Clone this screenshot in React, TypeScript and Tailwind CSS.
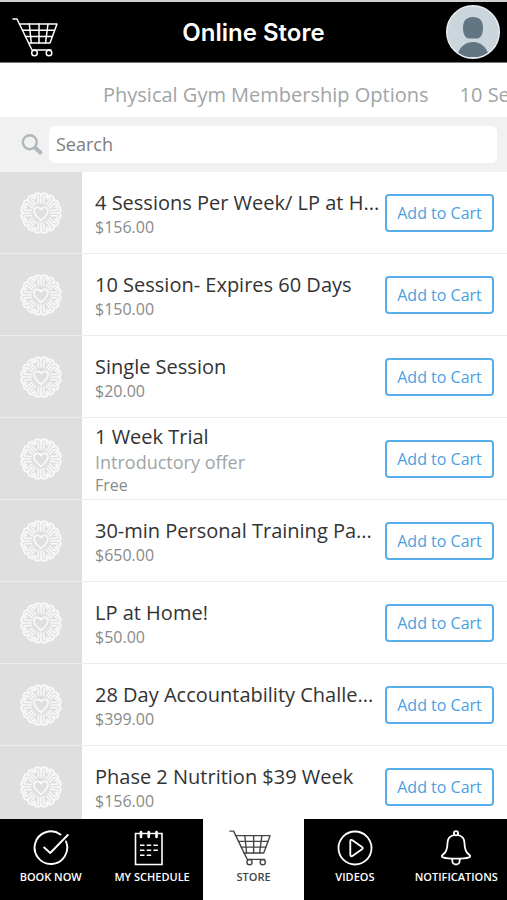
import type { ReactNode } from "react";
import clsx from "clsx";

type Product = {
  name: string;
  price: string;
  note?: string;
};

const categories = ["Physical Gym Membership Options", "10 Se"];

const products: Product[] = [
  { name: "4 Sessions Per Week/ LP at H...", price: "$156.00" },
  { name: "10 Session- Expires 60 Days", price: "$150.00" },
  { name: "Single Session", price: "$20.00" },
  { name: "1 Week Trial", price: "Free", note: "Introductory offer" },
  { name: "30-min Personal Training Pa...", price: "$650.00" },
  { name: "LP at Home!", price: "$50.00" },
  { name: "28 Day Accountability Challe...", price: "$399.00" },
  { name: "Phase 2 Nutrition $39 Week", price: "$156.00" },
];

function CartIcon({ className }: { className?: string }) {
  return (
    <svg viewBox="0 0 46 39" fill="none" stroke="currentColor" strokeWidth="1.5" strokeLinecap="round" strokeLinejoin="round" className={className} aria-hidden="true">
      <path d="M1 1h4l15 31h19" />
      <path d="M7.5 6H45l-7 19H16.5" />
      <path d="M10.5 12.3h32M13.5 18.6h26.8" />
      <path d="M17.3 6l2 19M27 6v19M36 6l-2.5 19" />
      <circle cx="22.5" cy="35" r="2.8" />
      <circle cx="37" cy="35" r="2.8" />
    </svg>
  );
}

function CheckIcon() {
  return (
    <svg viewBox="0 0 36 36" fill="none" stroke="currentColor" strokeWidth="1.9" strokeLinecap="round" strokeLinejoin="round" className="size-9" aria-hidden="true">
      <path d="M27.5 4.5A16.3 16.3 0 1 0 33 11.5" />
      <path d="M11.2 17.5l6 5.5L34.8 5" />
    </svg>
  );
}

function CalendarIcon() {
  return (
    <svg viewBox="0 0 36 36" fill="none" stroke="currentColor" strokeWidth="1.6" className="size-9" aria-hidden="true">
      <path d="M1.5 3.5H28v31H1.5z" />
      <path d="M7 2v5M14.7 2v5M22.5 2v5" strokeWidth="2.6" strokeLinecap="round" />
      <path d="M6 15.2h4.5M12.7 15.2h4.5M19.4 15.2h4.5M6 20.2h4.5M12.7 20.2h4.5M19.4 20.2h4.5M6 25.3h4.5M12.7 25.3h4.5" />
    </svg>
  );
}

function PlayIcon() {
  return (
    <svg viewBox="0 0 36 36" fill="none" stroke="currentColor" strokeWidth="1.8" strokeLinejoin="round" className="size-9" aria-hidden="true">
      <circle cx="18" cy="18" r="16.5" />
      <path d="M13.3 11.2v13.6c0 1.3 1 1.8 2.1 1.1l9.6-6.6c1-.7 1-1.7 0-2.4l-9.6-6.7c-1.1-.8-2.1-.3-2.1 1z" />
    </svg>
  );
}

function BellIcon() {
  return (
    <svg viewBox="0 0 36 36" fill="none" stroke="currentColor" strokeWidth="1.8" strokeLinecap="round" strokeLinejoin="round" className="size-9" aria-hidden="true">
      <circle cx="18" cy="3.3" r="2.1" />
      <path d="M16 5C12 6 9.5 9 9.5 13c0 6-1 9.500-5 12-1.2.8-.8 2 .4 2.3 3 1 8 1.4 13.1 1.4s10.1-.4 13.1-1.4c1.2-.3 1.6-1.5.4-2.3-4-2.5-5-6-5-12 0-4-2.5-7-6.500-8" />
      <path d="M14.3 29v1.8a3.7 3.7 0 0 0 7.4 0V29" />
    </svg>
  );
}

function SearchIcon() {
  return (
    <svg viewBox="0 0 22 22" fill="none" stroke="currentColor" strokeLinecap="round" className="size-[22px] shrink-0 text-[#aeb8bb]" aria-hidden="true">
      <circle cx="8.8" cy="8.2" r="7" strokeWidth="2.4" />
      <path d="M15 14.500l4.300 4" strokeWidth="4" />
    </svg>
  );
}

const lobes = Array.from({ length: 8 }, (_, i) => i * 45 + 22.5);

// Placeholder emblem: a heart inside a ring of petals
function Emblem() {
  return (
    <svg viewBox="-21 -21 42 42" fill="none" stroke="#f8f8f8" strokeLinecap="round" strokeLinejoin="round" className="size-[42px]" aria-hidden="true">
      {lobes.map((angle) => (
        <g key={angle} transform={`rotate(${angle})`}>
          <path d="M-6.5-16C-7-20.500-2-20.500 0-18.500C2-20.500 7-20.500 6.5-16" strokeWidth="2" />
          <path d="M-1.300-10L-3.500-15.500C-3.500-18 -1-18 0-15.500C1-18 3.500-18 3.500-15.500L1.300-10" strokeWidth="1.600" />
        </g>
      ))}
      {lobes.map((angle) => (
        <path key={angle} d="M0-10V-16" strokeWidth="1.6" transform={`rotate(${angle + 22.5})`} />
      ))}
      <path d="M0 7.5C-3 4.5-7 2-7-2C-7-6-2-7 0-3.5C2-7 7-6 7-2C7 2 3 4.5 0 7.5z" strokeWidth="1.800" />
    </svg>
  );
}

function Avatar() {
  return (
    <svg viewBox="0 0 54 54" className="size-[54px]" aria-hidden="true">
      <defs>
        <clipPath id="avatar-clip">
          <circle cx="27" cy="27" r="25.5" />
        </clipPath>
      </defs>
      <circle cx="27" cy="27" r="26.3" fill="#cbd5dc" stroke="#edf1f3" strokeWidth="1.4" />
      <g fill="#627583" clipPath="url(#avatar-clip)">
        <path d="M27 12c6.5 0 10 4 10 10.5 0 7-2.5 11-6 11h-8c-3.500 0-6-4-6-11C17 16 20.500 12 27 12z" />
        <path d="M11 52c1.500-9.500 8-15 16-15s14.500 5.500 16 15z" />
      </g>
    </svg>
  );
}

function ProductRow({ product }: { product: Product }) {
  return (
    <li className="flex h-[82px] shrink-0 border-b border-[#ededed]">
      <div className="flex w-[82px] shrink-0 items-center justify-center bg-[#dfdfdf]">
        <Emblem />
      </div>
      <div className="flex min-w-0 flex-1 flex-col justify-center pt-0.5 pl-[13px]">
        <h2 className="truncate text-xl leading-[26px] text-[#333]">{product.name}</h2>
        {product.note && <p className="text-lg leading-6 text-[#a0a5a6]">{product.note}</p>}
        <p className="text-base leading-[22px] text-[#8a8a8a]">{product.price}</p>
      </div>
      <div className="flex shrink-0 items-center pr-[13px] pl-0.5">
        <button type="button" className="h-[38px] w-[109px] rounded border-2 border-[#58aeea] text-base text-[#4a9fe0]">
          Add to Cart
        </button>
      </div>
    </li>
  );
}

function NavItem({ label, icon, active }: { label: string; icon: ReactNode; active?: boolean }) {
  return (
    <a
      href="#"
      aria-current={active ? "page" : undefined}
      className={clsx(
        "flex flex-1 basis-0 flex-col items-center gap-[3px] pt-[11px] text-[11px] leading-4 font-semibold whitespace-nowrap",
        active ? "bg-white text-[#444]" : "bg-black text-white",
      )}
    >
      {icon}
      {label}
    </a>
  );
}

export default function App() {
  return (
    <div className="flex h-screen flex-col overflow-hidden bg-white font-['Open_Sans',sans-serif]">
      <header className="grid h-[63px] shrink-0 grid-cols-[1fr_auto_1fr] items-center border-t-2 border-b border-t-[#cfcfcf] border-b-[#777] bg-black">
        <button type="button" aria-label="Cart" className="ml-3 justify-self-start pt-2.5 text-white">
          <CartIcon className="h-[39px] w-[46px]" />
        </button>
        <h1 className="pt-0.5 font-['Inter',sans-serif] text-2xl font-semibold text-white">Online Store</h1>
        <button type="button" aria-label="Profile" className="mr-[7px] justify-self-end">
          <Avatar />
        </button>
      </header>

      <nav aria-label="Categories" className="flex h-[54px] shrink-0 items-center gap-[31px] overflow-hidden pt-2.5 pl-[103px] text-xl text-[#a0a5a6]">
        {categories.map((category) => (
          <a key={category} href="#" className="shrink-0 whitespace-nowrap">
            {category}
          </a>
        ))}
      </nav>

      <label className="flex h-[55px] shrink-0 items-center gap-[6px] bg-[#f1f1f1] pr-[10px] pl-[21px]">
        <SearchIcon />
        <input
          type="search"
          aria-label="Search"
          placeholder="Search"
          className="h-[37px] min-w-0 flex-1 rounded-md bg-white px-[7px] pb-0.5 text-lg text-[#333] placeholder:text-[#7d7d7d]"
        />
      </label>

      <ul className="flex min-h-0 flex-1 flex-col overflow-hidden">
        {products.map((product) => (
          <ProductRow key={product.name} product={product} />
        ))}
      </ul>

      <nav aria-label="Main" className="flex h-[81px] shrink-0">
        <NavItem label="BOOK NOW" icon={<CheckIcon />} />
        <NavItem label="MY SCHEDULE" icon={<CalendarIcon />} />
        <NavItem label="STORE" icon={<CartIcon className="mr-2 h-9 w-[42px]" />} active />
        <NavItem label="VIDEOS" icon={<PlayIcon />} />
        <NavItem label="NOTIFICATIONS" icon={<BellIcon />} />
      </nav>
    </div>
  );
}
